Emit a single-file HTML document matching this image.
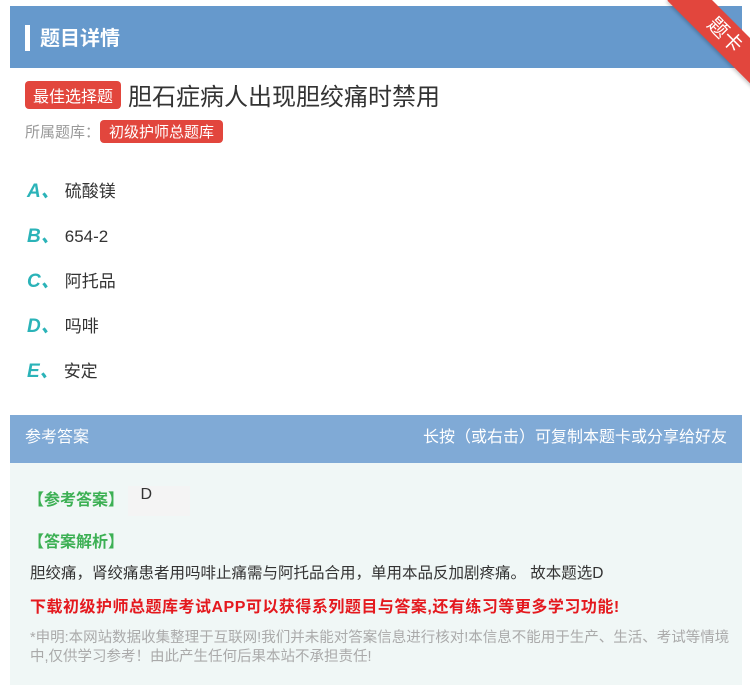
<!DOCTYPE html>
<html><head><meta charset="utf-8"><style>
*{margin:0;padding:0;box-sizing:border-box}
body{width:750px;height:685px;background:#fff;font-family:"Liberation Sans","Noto Sans CJK SC",sans-serif;position:relative;overflow:hidden}
.hdr{position:absolute;left:10px;top:6px;width:732px;height:62px;background:#6699cc}
.hdr .bar{position:absolute;left:15px;top:19px;width:5px;height:26px;background:#fff}
.hdr .t{position:absolute;left:30px;top:16px;color:#fff;font-size:20px;font-weight:bold}
.rib{position:absolute;width:130px;height:32px;background:#e2463d;transform:rotate(45deg);transform-origin:0 0;left:690px;top:-22px;color:#fff;font-size:20px;text-align:center;line-height:32px;box-shadow:0 2px 3px rgba(0,0,0,.2)}
.tag{display:inline-block;background:#e2463d;color:#fff;border-radius:4px}
.q{position:absolute;left:25px;top:77px;font-size:24px;color:#333}
.q .tag{font-size:16px;padding:2px 8px;vertical-align:3px;margin-right:7px}
.lib{position:absolute;left:25px;top:120px;font-size:15px;color:#999}
.lib .tag{font-size:15px;padding:1px 9px}
.opt{position:absolute;left:27px;font-size:17px;color:#333}
.opt b{color:#2bb3b8;font-style:italic;font-size:19px;margin-right:5px}
.ans{position:absolute;left:10px;top:415px;width:732px;height:270px;background:#f0f7f6}
.ah{height:48px;background:#80aad6;color:#fff;font-size:16px;line-height:46px;padding:0 15px}
.ah span{float:right}
.g{color:#3cb054;font-size:16px;font-weight:bold;position:absolute;left:18px}
.txt{position:absolute;left:20px;font-size:15px;color:#333}
</style></head><body>
<div class="hdr"><div class="bar"></div><div class="t">题目详情</div></div>
<div class="rib">题卡</div>
<div class="q"><span class="tag">最佳选择题</span>胆石症病人出现胆绞痛时禁用</div>
<div class="lib">所属题库：<span class="tag">初级护师总题库</span></div>
<div class="opt" style="top:176px"><b>A、</b>硫酸镁</div>
<div class="opt" style="top:221px"><b>B、</b>654-2</div>
<div class="opt" style="top:266px"><b>C、</b>阿托品</div>
<div class="opt" style="top:311px"><b>D、</b>吗啡</div>
<div class="opt" style="top:356px"><b>E、</b>安定</div>
<div class="ans">
<div class="ah">参考答案<span>长按（或右击）可复制本题卡或分享给好友</span></div>
<div class="g" style="top:71px">【参考答案】 <span style="display:inline-block;width:62px;height:30px;background:#f4f4f4;color:#333;font-weight:normal;vertical-align:middle;padding-left:12px">D</span></div>
<div class="g" style="top:113px">【答案解析】</div>
<div class="txt" style="top:146px;font-size:15.5px">胆绞痛，肾绞痛患者用吗啡止痛需与阿托品合用，单用本品反加剧疼痛。 故本题选D</div>
<div class="txt" style="top:178px;color:#e4191e;font-weight:bold;font-size:16px;letter-spacing:0.5px">下载初级护师总题库考试APP可以获得系列题目与答案,还有练习等更多学习功能!</div>
<div class="txt" style="top:214px;color:#aaa;font-size:14.5px;width:700px;line-height:19px">*申明:本网站数据收集整理于互联网!我们并未能对答案信息进行核对!本信息不能用于生产、生活、考试等情境中,仅供学习参考！由此产生任何后果本站不承担责任!</div>
</div>
</body></html>
